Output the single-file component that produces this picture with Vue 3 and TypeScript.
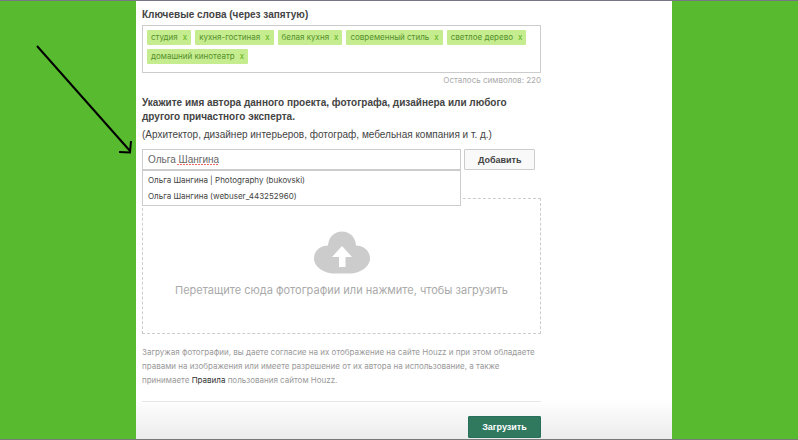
<script setup lang="ts">
import { ref } from 'vue'

const tags = ref<string[]>([
  'студия',
  'кухня-гостиная',
  'белая кухня',
  'современный стиль',
  'светлое дерево',
  'домашний кинотеатр',
])
const expert = ref('Ольга Шангина')
const suggestions: string[] = [
  'Ольга Шангина | Photography (bukovski)',
  'Ольга Шангина (webuser_443252960)',
]

function removeTag(tag: string) {
  tags.value = tags.value.filter((t) => t !== tag)
}
</script>

<template>
  <div class="page">
    <svg class="arrow" viewBox="0 0 100 112" aria-hidden="true">
      <path d="M5 4L98.500 109.500M99 99L98 110.500L87 110" />
    </svg>
    <main class="panel">
      <form class="form" @submit.prevent>
        <h2 class="title">Ключевые слова (через запятую)</h2>
        <ul class="tags">
          <li v-for="tag in tags" :key="tag" class="tag">
            {{ tag }}
            <button type="button" class="remove" @click="removeTag(tag)">x</button>
          </li>
        </ul>
        <p class="remaining">Осталось символов: 220</p>

        <label class="title expert-label" for="expert">
          Укажите имя автора данного проекта, фотографа, дизайнера или любого другого причастного эксперта.
        </label>
        <p class="hint">(Архитектор, дизайнер интерьеров, фотограф, мебельная компания и т. д.)</p>
        <div class="expert-row">
          <div class="combo">
            <input id="expert" v-model="expert" class="field" type="text" autocomplete="off" />
            <svg class="spelling" viewBox="0 0 42 3" aria-hidden="true">
              <path d="M0 1.500H42" />
            </svg>
            <ul class="menu">
              <li v-for="s in suggestions" :key="s">{{ s }}</li>
            </ul>
          </div>
          <button type="button" class="add">Добавить</button>
        </div>

        <button type="button" class="dropzone">
          <svg class="cloud" viewBox="0 0 56 43" aria-hidden="true">
            <path
              class="cloud-body"
              d="M18 42.500C12 42 0 37 0 27.500C0 20 6 14.500 14 14.500C14.500 6 20.500 0.500 28 0.500C35.500 0.500 41.500 6 42 14.500C50 14.500 56 20 56 27.500C56 37 44 42 38 42.500Z"
            />
            <path class="cloud-arrow" d="M28 15L38 26H31.500V36H25V26H18Z" />
          </svg>
          <span>Перетащите сюда фотографии или нажмите, чтобы загрузить</span>
        </button>

        <p class="legal">
          Загружая фотографии, вы даете согласие на их отображение на сайте Houzz и при этом обладаете
          правами на изображения или имеете разрешение от их автора на использование, а также
          принимаете <a href="#">Правила</a> пользования сайтом Houzz.
        </p>
        <div class="actions">
          <button type="submit" class="submit">Загрузить</button>
        </div>
      </form>
    </main>
  </div>
</template>

<style>
body {
  margin: 0;
}
</style>

<style scoped>
.page {
  position: relative;
  box-sizing: border-box;
  min-height: 100vh;
  display: grid;
  grid-template-columns: 136px minmax(0, 1fr) 126px;
  background: #57ba2f;
  border-top: 1px solid #777783;
  border-bottom: 1px solid #777a78;
  font-family: 'Liberation Sans', Arial, sans-serif;
  font-size: 10px;
  color: #444;
}
.page * {
  box-sizing: border-box;
}
button,
input {
  font-family: inherit;
  margin: 0;
}
p,
h2,
ul {
  margin: 0;
  padding: 0;
  list-style: none;
}
.tags,
.remaining,
.menu,
.dropzone,
.legal {
  font-family: Inter, 'Liberation Sans', sans-serif;
}
.arrow {
  position: absolute;
  left: 32px;
  top: 41px;
  width: 100px;
  height: 112px;
  overflow: visible;
  z-index: 2;
  fill: none;
  stroke: #000;
  stroke-width: 2;
}
.panel {
  grid-column: 2;
  padding: 7px 6px 0;
  background: linear-gradient(to top, #ececec, #fff 40px);
}
.form {
  max-width: 399px;
}
.title {
  display: block;
  font-size: 10px;
  line-height: 14px;
  font-weight: bold;
}
.tags {
  display: flex;
  flex-wrap: wrap;
  align-content: flex-start;
  gap: 4px;
  min-height: 48px;
  margin-top: 3px;
  padding: 4px;
  border: 1px solid #ccc;
}
.tag {
  display: flex;
  gap: 5px;
  padding: 0 4px;
  border-radius: 1px;
  background: #c5ec8e;
  color: #54902b;
  font-size: 8px;
  line-height: 15px;
}
.remove {
  padding: 0;
  border: 0;
  background: none;
  color: #5eb021;
  font-size: 8px;
  line-height: 15px;
}
.remaining {
  margin-top: 1px;
  text-align: right;
  font-size: 8px;
  line-height: 12px;
  color: #aaa;
}
.expert-label {
  margin-top: 10px;
}
.hint {
  margin-top: 4px;
  line-height: 14px;
}
.expert-row {
  display: flex;
  gap: 3px;
  margin-top: 7px;
}
.combo {
  position: relative;
  width: 80%;
}
.field {
  display: block;
  width: 100%;
  height: 21px;
  padding: 0 5px;
  border: 1px solid #ccc;
  border-radius: 0;
  background: #fff;
  color: #666;
  font-size: 10px;
  outline: 0;
}
.spelling {
  position: absolute;
  left: 35px;
  top: 14px;
  width: 42px;
  height: 3px;
  stroke: #e66;
  stroke-dasharray: 2 1;
}
.menu {
  position: absolute;
  z-index: 1;
  top: 21px;
  left: 0;
  right: 0;
  padding: 1px 5px;
  border: 1px solid #ccc;
  background: #fff;
  font-size: 8px;
  line-height: 16px;
}
.add {
  width: 71px;
  height: 21px;
  padding: 0;
  border: 1px solid #ccc;
  border-radius: 1px;
  background: #f9f9f9;
  color: #444;
  font-size: 9px;
  font-weight: bold;
}
.dropzone {
  display: flex;
  flex-direction: column;
  align-items: center;
  gap: 9px;
  width: 100%;
  margin-top: 28px;
  padding: 32px 0 36px;
  border: 1px dashed #ccc;
  background: none;
  color: #aaa;
  font-size: 11px;
  line-height: 14px;
}
.cloud {
  width: 56px;
  height: 43px;
}
.cloud-body {
  fill: #ccc;
}
.cloud-arrow {
  fill: #fff;
}
.legal {
  margin-top: 11px;
  font-size: 8px;
  line-height: 14px;
  color: #999;
}
.legal a {
  color: #333;
  text-decoration: none;
}
.actions {
  display: flex;
  justify-content: flex-end;
  margin-top: 14px;
  padding-top: 14px;
  border-top: 1px solid #e6e6e6;
}
.submit {
  width: 73px;
  height: 22px;
  padding: 0;
  border: 1px solid #28705c;
  border-radius: 1px;
  background: #30795f;
  color: #fff;
  font-size: 9px;
  font-weight: bold;
}
</style>
